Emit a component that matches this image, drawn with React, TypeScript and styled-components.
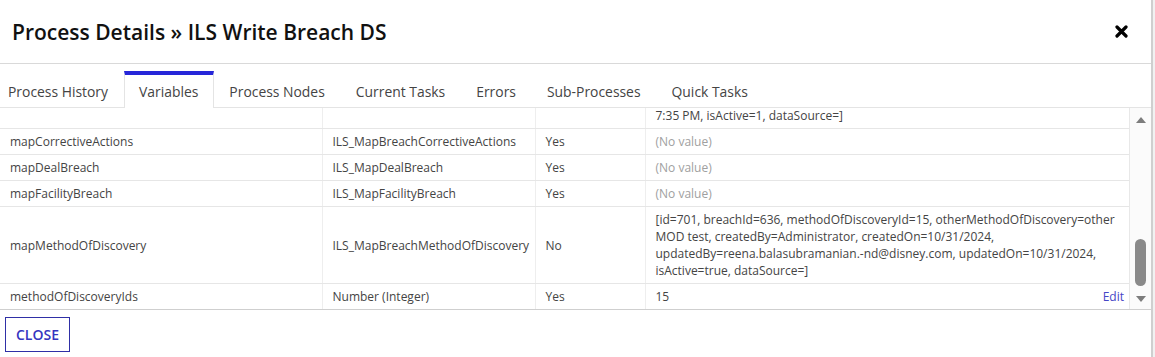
import React, { useLayoutEffect, useRef } from 'react'
import styled, { createGlobalStyle, css } from 'styled-components'

interface Variable {
  name: string
  type: string
  required: string
  value: string[] | null
  editable?: boolean
}

const tabs = [
  'Process History',
  'Variables',
  'Process Nodes',
  'Current Tasks',
  'Errors',
  'Sub-Processes',
  'Quick Tasks'
]

// first entry is the tail of a row scrolled out of view above
const variables: Variable[] = [
  { name: '', type: '', required: '', value: ['7:35 PM, isActive=1, dataSource=]'] },
  { name: 'mapCorrectiveActions', type: 'ILS_MapBreachCorrectiveActions', required: 'Yes', value: null },
  { name: 'mapDealBreach', type: 'ILS_MapDealBreach', required: 'Yes', value: null },
  { name: 'mapFacilityBreach', type: 'ILS_MapFacilityBreach', required: 'Yes', value: null },
  {
    name: 'mapMethodOfDiscovery',
    type: 'ILS_MapBreachMethodOfDiscovery',
    required: 'No',
    value: [
      '[id=701, breachId=636, methodOfDiscoveryId=15, otherMethodOfDiscovery=other',
      'MOD test, createdBy=Administrator, createdOn=10/31/2024,',
      'updatedBy=reena.balasubramanian.-nd@disney.com, updatedOn=10/31/2024,',
      'isActive=true, dataSource=]'
    ]
  },
  { name: 'methodOfDiscoveryIds', type: 'Number (Integer)', required: 'Yes', value: ['15'], editable: true }
]

export default function App() {
  const scrollRef = useRef<HTMLDivElement>(null)

  // the list is scrolled down to its end, as in the dialog
  useLayoutEffect(() => {
    const el = scrollRef.current
    if (el) el.scrollTop = el.scrollHeight - el.clientHeight
  }, [])

  return (
    <>
      <GlobalStyle />
      <Dialog>
        <Header>
          <Title>Process Details » ILS Write Breach DS</Title>
          <CloseIcon aria-label="Close">
            <svg width="13" height="13" viewBox="0 0 13 13">
              <path d="M2 2 L11 11 M11 2 L2 11" stroke="#000" strokeWidth="3.2" strokeLinecap="round" />
            </svg>
          </CloseIcon>
        </Header>

        <TabBar>
          {tabs.map((t) => (
            <Tab key={t} $active={t === 'Variables'}>{t}</Tab>
          ))}
        </TabBar>

        <Body>
          <ScrollArea ref={scrollRef}>
            <Table>
              <colgroup>
                <col style={{ width: 322 }} />
                <col style={{ width: 213 }} />
                <col style={{ width: 110 }} />
                <col />
              </colgroup>
              <tbody>
                {variables.map((v, idx) => (
                  <Row key={idx}>
                    <Cell>{v.name}</Cell>
                    <Cell>{v.type}</Cell>
                    <Cell>{v.required}</Cell>
                    <Cell>
                      {v.value === null && <Empty>(No value)</Empty>}
                      {v.value !== null && !v.editable && v.value.map((line, i) => (
                        <Line key={i}>{line}</Line>
                      ))}
                      {v.editable && (
                        <ValueWithAction>
                          <span>{v.value?.[0]}</span>
                          <EditLink href="#">Edit</EditLink>
                        </ValueWithAction>
                      )}
                    </Cell>
                  </Row>
                ))}
              </tbody>
            </Table>
          </ScrollArea>
          <ScrollBar>
            <Arrow viewBox="0 0 10 6" width="10" height="6">
              <path d="M0 6 L5 0 L10 6 Z" fill="#7d7d7d" />
            </Arrow>
            <Thumb />
            <Arrow viewBox="0 0 10 6" width="10" height="6">
              <path d="M0 0 L10 0 L5 6 Z" fill="#7d7d7d" />
            </Arrow>
          </ScrollBar>
        </Body>

        <Footer>
          <CloseButton>CLOSE</CloseButton>
        </Footer>
      </Dialog>
    </>
  )
}

const GlobalStyle = createGlobalStyle`
  html, body {
    margin: 0;
    padding: 0;
    background: #f1f1f1;
  }
  body {
    font-family: "Open Sans", "Noto Sans", sans-serif;
    color: #444;
  }
`

const Dialog = styled.div`
  width: 1151px;
  height: 357px;
  background: #fff;
  border-right: 2px solid #cfcfcf;
  display: flex;
  flex-direction: column;
  overflow: hidden;
`

const Header = styled.div`
  height: 63px;
  flex-shrink: 0;
  border-bottom: 1px solid #d9d9d9;
  display: flex;
  align-items: center;
  justify-content: space-between;
  padding: 0 23px 0 12px;
`

const Title = styled.h1`
  margin: 0;
  font-size: 21px;
  font-weight: 600;
  color: #111;
`

const CloseIcon = styled.button`
  border: 0;
  background: none;
  padding: 0;
  width: 13px;
  height: 13px;
  display: flex;
  cursor: pointer;
`

const TabBar = styled.div`
  height: 43px;
  flex-shrink: 0;
  border-bottom: 1px solid #e4e4e4;
  display: flex;
  align-items: flex-end;
`

const Tab = styled.div<{ $active?: boolean }>`
  height: 33px;
  padding: 0 14.5px;
  margin-bottom: -1px;
  display: flex;
  align-items: center;
  font-size: 13.9px;
  line-height: 20px;
  white-space: nowrap;
  color: #444;
  border-top: 4px solid transparent;
  border-left: 1px solid transparent;
  border-right: 1px solid transparent;
  &:first-child {
    padding-left: 8px;
    border-left: 0;
  }
  ${(p) =>
    p.$active &&
    css`
      border-top-color: #2626d9;
      border-left-color: #e4e4e4;
      border-right-color: #e4e4e4;
      background: #fff;
    `}
`

const Body = styled.div`
  height: 201px;
  flex-shrink: 0;
  display: flex;
  border-bottom: 1px solid #cfcfcf;
`

const ScrollArea = styled.div`
  flex: 1;
  overflow: hidden;
  border-right: 1px solid #e8e8e8;
`

const Table = styled.table`
  width: 100%;
  table-layout: fixed;
  border-collapse: collapse;
  font-size: 12px;
  color: #444;
`

const Row = styled.tr`
  &:last-child td {
    border-bottom: 0;
  }
`

const Cell = styled.td`
  padding: 4px 10px;
  line-height: 17px;
  vertical-align: middle;
  border-bottom: 1px solid #e6e6e6;
  border-right: 1px solid #eeeeee;
  &:last-child {
    border-right: 0;
  }
`

const Line = styled.div`
  white-space: nowrap;
`

const Empty = styled.span`
  color: #a0a0a0;
`

const ValueWithAction = styled.div`
  display: flex;
  justify-content: space-between;
  margin-right: -5px;
`

const EditLink = styled.a`
  color: #4646c6;
  text-decoration: none;
`

const ScrollBar = styled.div`
  width: 21px;
  flex-shrink: 0;
  background: #fbfbfb;
  display: flex;
  flex-direction: column;
  align-items: center;
  padding: 9px 0 7px;
`

const Arrow = styled.svg`
  display: block;
  flex-shrink: 0;
`

const Thumb = styled.div`
  width: 11px;
  height: 47px;
  border-radius: 6px;
  background: #8a8a8a;
  margin-top: auto;
  margin-bottom: 10px;
`

const Footer = styled.div`
  flex: 1;
  padding: 7px 5px;
`

const CloseButton = styled.button`
  height: 35px;
  width: 65px;
  border: 1.5px solid #2f2fa6;
  background: #fff;
  color: #3535c0;
  font-family: "Open Sans", sans-serif;
  font-size: 14px;
  font-weight: 600;
  padding: 0;
  cursor: pointer;
`
